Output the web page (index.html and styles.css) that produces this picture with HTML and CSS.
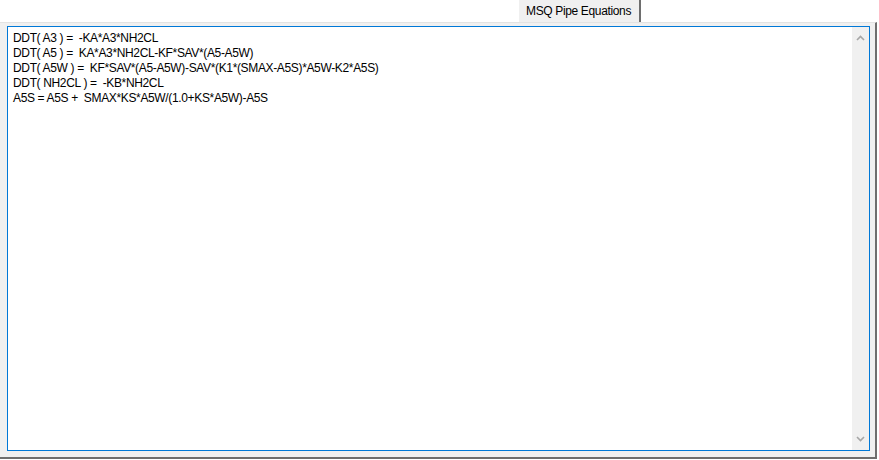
FILE: index.html
```html
<!DOCTYPE html>
<html>
<head>
<meta charset="utf-8">
<link rel="stylesheet" href="styles.css">
</head>
<body>
<div class="window">
  <div class="tabstrip">
    <div class="tab">MSQ Pipe Equations</div>
  </div>
  <div class="page">
    <div class="editor">
      <div class="text">DDT( A3 ) =  -KA*A3*NH2CL
DDT( A5 ) =  KA*A3*NH2CL-KF*SAV*(A5-A5W)
DDT( A5W ) =  KF*SAV*(A5-A5W)-SAV*(K1*(SMAX-A5S)*A5W-K2*A5S)
DDT( NH2CL ) =  -KB*NH2CL
A5S = A5S +  SMAX*KS*A5W/(1.0+KS*A5W)-A5S</div>
      <div class="scrollbar">
        <svg class="arrow" width="9" height="6" viewBox="0 0 9 6"><path d="M1 5 L4.5 1.5 L8 5" fill="none" stroke="#a6a6a6" stroke-width="1.6"/></svg>
        <svg class="arrow" width="9" height="6" viewBox="0 0 9 6"><path d="M1 1 L4.5 4.5 L8 1" fill="none" stroke="#a6a6a6" stroke-width="1.6"/></svg>
      </div>
    </div>
  </div>
</div>
</body>
</html>
```
FILE: styles.css
```css
html, body {
  margin: 0;
  padding: 0;
  background: #ffffff;
}
body {
  width: 879px;
  height: 460px;
  overflow: hidden;
  font-family: "Liberation Sans", Arial, sans-serif;
  font-size: 12px;
  color: #000;
}
.window {
  display: flex;
  flex-direction: column;
  width: 877px;
  height: 459px;
}
.tabstrip {
  height: 22px;
  display: flex;
  padding-left: 519px;
}
.tab {
  width: 122px;
  height: 22px;
  background: #f0f0f0;
  border-right: 2px solid #6e6e6e;
  box-sizing: border-box;
  padding-left: 7px;
  line-height: 22px;
  font-size: 12px;
  letter-spacing: -0.35px;
  white-space: nowrap;
}
.page {
  flex: 1;
  background: #f0f0f0;
  border-top: 1px solid #e3e3e3;
  border-right: 2px solid #6e6e6e;
  border-bottom: 2px solid #6e6e6e;
  padding: 3px 5px 6px 7px;
  display: flex;
}
.editor {
  flex: 1;
  border: 1px solid #0078d7;
  background: #fff;
  display: flex;
}
.text {
  flex: 1;
  white-space: pre;
  padding: 4px 0 0 5px;
  line-height: 15px;
  font-size: 12px;
  letter-spacing: -0.35px;
}
.scrollbar {
  width: 17px;
  background: #f0f0f0;
  display: flex;
  flex-direction: column;
  justify-content: space-between;
  align-items: center;
  padding: 8px 0 8px 0;
}
.arrow {
  display: block;
}
```
